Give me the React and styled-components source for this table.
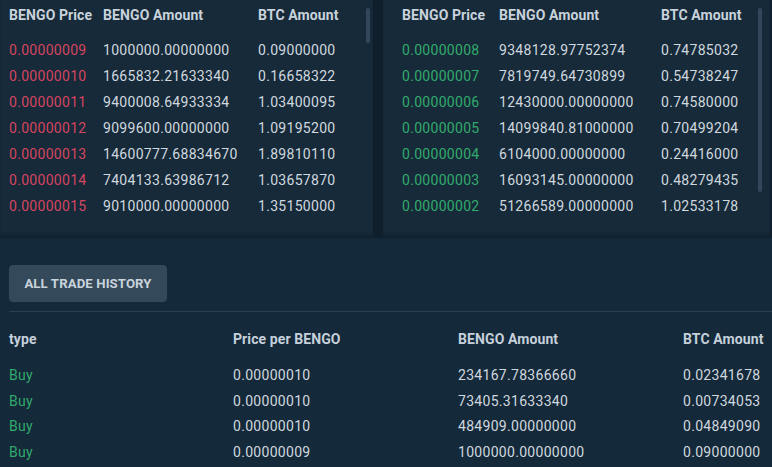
import React from 'react';
import styled, { createGlobalStyle } from 'styled-components';

const GlobalStyle = createGlobalStyle`
  html, body {
    margin: 0;
    padding: 0;
    background: #14293a;
    overflow: hidden;
  }
  body {
    font-family: Roboto, 'Noto Sans', sans-serif;
    color: #d0d8df;
  }
`;

const Page = styled.div`
  width: 772px;
  height: 467px;
  background: #14293a;
`;

const BookRow = styled.div`
  display: flex;
  gap: 10px;
  background: #0f1f2b;
  padding-right: 2px;
`;

const Panel = styled.div`
  position: relative;
  width: ${(p) => p.$width}px;
  height: 238px;
  box-sizing: border-box;
  padding: 2px 0 0 ${(p) => p.$pad}px;
  background: #162a3a;
  box-shadow: inset 0 -5px 4px -3px rgba(10, 22, 32, 0.6);
`;

const Thumb = styled.div`
  position: absolute;
  top: 8px;
  right: ${(p) => p.$right}px;
  width: 4px;
  height: ${(p) => p.$height}px;
  border-radius: 2px;
  background: #33475a;
`;

const BookGrid = styled.div`
  display: grid;
  grid-template-columns: ${(p) => p.$cols};
  font-size: 14px;
  letter-spacing: 0.3px;
  line-height: 26px;
  white-space: nowrap;
`;

const HeadCell = styled.div`
  font-weight: 700;
  font-size: 14px;
  letter-spacing: 0.1px;
  color: #c8d2db;
  margin-bottom: 9px;
`;

const PriceCell = styled.div`
  color: ${(p) => (p.$side === 'sell' ? '#d5455f' : '#32aa6b')};
`;

const Cell = styled.div`
  color: #d0d8df;
`;

const History = styled.div`
  padding: 27px 0 0 9px;
`;

const HistoryButton = styled.button`
  display: block;
  height: 37px;
  width: 158px;
  border: none;
  border-radius: 4px;
  background: #34495a;
  color: #c9d3dc;
  font-family: Roboto, 'Noto Sans', sans-serif;
  font-weight: 700;
  font-size: 13.2px;
  letter-spacing: 0.1px;
  padding: 0;
  cursor: pointer;
`;

const Divider = styled.div`
  height: 1px;
  background: #2b4050;
  margin: 9px 0 14px;
`;

const TradeGrid = styled.div`
  display: grid;
  grid-template-columns: 224px 225px 225px auto;
  font-size: 14px;
  letter-spacing: 0.3px;
  line-height: 25.5px;
  white-space: nowrap;
`;

const TradeHead = styled.div`
  font-weight: 700;
  font-size: 14px;
  letter-spacing: 0.1px;
  color: #c5d0da;
  line-height: 26px;
  margin-bottom: 11px;
`;

const TypeCell = styled.div`
  color: #32aa6b;
`;

const sells = [
  ['0.00000009', '1000000.00000000', '0.09000000'],
  ['0.00000010', '1665832.21633340', '0.16658322'],
  ['0.00000011', '9400008.64933334', '1.03400095'],
  ['0.00000012', '9099600.00000000', '1.09195200'],
  ['0.00000013', '14600777.68834670', '1.89810110'],
  ['0.00000014', '7404133.63986712', '1.03657870'],
  ['0.00000015', '9010000.00000000', '1.35150000'],
];

const buys = [
  ['0.00000008', '9348128.97752374', '0.74785032'],
  ['0.00000007', '7819749.64730899', '0.54738247'],
  ['0.00000006', '12430000.00000000', '0.74580000'],
  ['0.00000005', '14099840.81000000', '0.70499204'],
  ['0.00000004', '6104000.00000000', '0.24416000'],
  ['0.00000003', '16093145.00000000', '0.48279435'],
  ['0.00000002', '51266589.00000000', '1.02533178'],
];

const trades = [
  ['Buy', '0.00000010', '234167.78366660', '0.02341678'],
  ['Buy', '0.00000010', '73405.31633340', '0.00734053'],
  ['Buy', '0.00000010', '484909.00000000', '0.04849090'],
  ['Buy', '0.00000009', '1000000.00000000', '0.09000000'],
];

const OrderBook = ({ rows, side, cols }) => (
  <BookGrid $cols={cols}>
    <HeadCell>BENGO Price</HeadCell>
    <HeadCell>BENGO Amount</HeadCell>
    <HeadCell>BTC Amount</HeadCell>
    {rows.map(([price, amount, btc]) => (
      <React.Fragment key={price}>
        <PriceCell $side={side}>{price}</PriceCell>
        <Cell>{amount}</Cell>
        <Cell>{btc}</Cell>
      </React.Fragment>
    ))}
  </BookGrid>
);

const App = () => (
  <Page>
    <GlobalStyle />
    <BookRow>
      <Panel $width={373} $pad={9}>
        <OrderBook rows={sells} side="sell" cols="94px 155px auto" />
        <Thumb $right={3} $height={35} />
      </Panel>
      <Panel $width={387} $pad={19}>
        <OrderBook rows={buys} side="buy" cols="97px 162px auto" />
        <Thumb $right={8} $height={184} />
      </Panel>
    </BookRow>
    <History>
      <HistoryButton>ALL TRADE HISTORY</HistoryButton>
      <Divider />
      <TradeGrid>
        <TradeHead>type</TradeHead>
        <TradeHead>Price per BENGO</TradeHead>
        <TradeHead>BENGO Amount</TradeHead>
        <TradeHead>BTC Amount</TradeHead>
        {trades.map(([type, price, amount, btc], i) => (
          <React.Fragment key={i}>
            <TypeCell>{type}</TypeCell>
            <Cell>{price}</Cell>
            <Cell>{amount}</Cell>
            <Cell>{btc}</Cell>
          </React.Fragment>
        ))}
      </TradeGrid>
    </History>
  </Page>
);

export default App;
